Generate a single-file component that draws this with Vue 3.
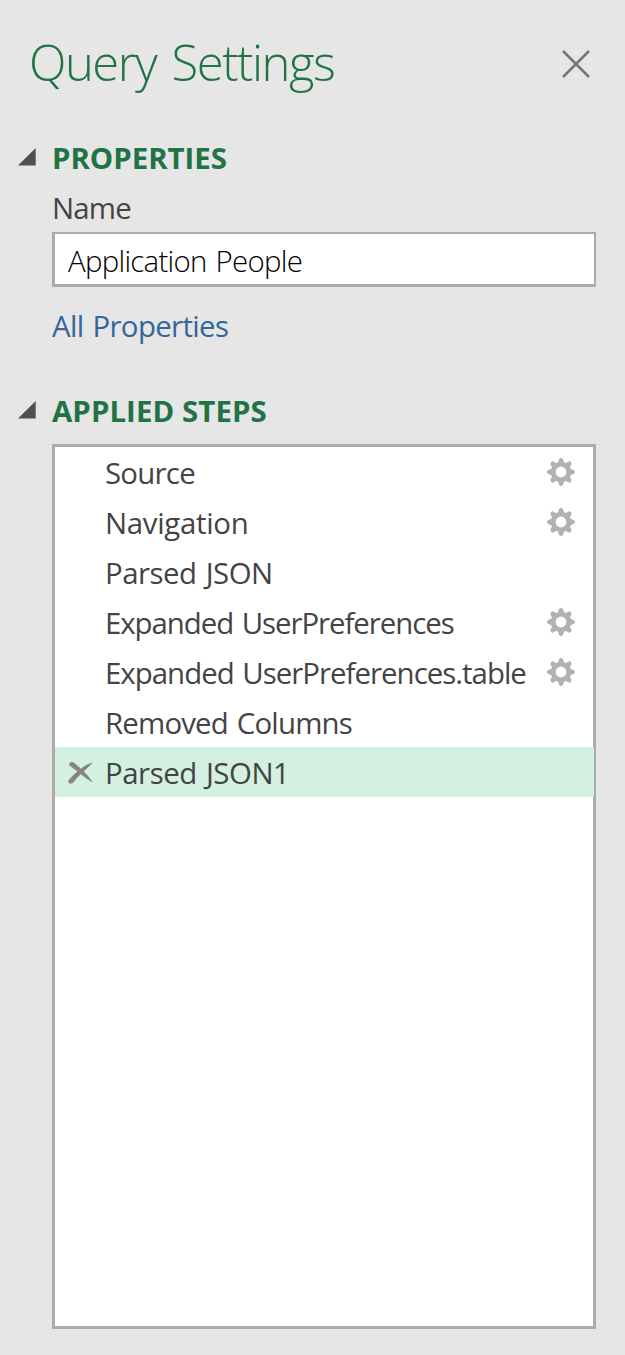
<script setup>
const steps = [
  { name: 'Source', gear: true, spacing: -0.75 },
  { name: 'Navigation', gear: true, spacing: -0.3 },
  { name: 'Parsed JSON', gear: false, spacing: -0.5 },
  { name: 'Expanded UserPreferences', gear: true, spacing: -1.05 },
  { name: 'Expanded UserPreferences.table', gear: true, spacing: -0.98 },
  { name: 'Removed Columns', gear: false, spacing: -0.82 },
  { name: 'Parsed JSON1', gear: false, selected: true, spacing: -0.46 },
]
const teeth = [0, 45, 90, 135, 180, 225, 270, 315]
</script>

<template>
  <aside class="pane">
    <header class="head">
      <h1 class="title">Query Settings</h1>
      <svg class="close" width="28" height="28" viewBox="0 0 28 28">
        <path d="M1 1 27 27M27 1 1 27" fill="none" stroke="#767676" stroke-width="2.5" />
      </svg>
    </header>

    <section class="properties">
      <h2 class="section-title">
        <svg class="arrow" width="18" height="18" viewBox="0 0 18 18"><path d="M17.7 0V17.5H0Z" fill="#505050" /></svg>
        <span class="props-label">PROPERTIES</span>
      </h2>
      <label class="name-label">Name</label>
      <div class="name-box"><span>Application People</span></div>
      <a class="link">All Properties</a>
    </section>

    <section class="applied">
      <h2 class="section-title">
        <svg class="arrow" width="18" height="18" viewBox="0 0 18 18"><path d="M17.7 0V17.5H0Z" fill="#505050" /></svg>
        <span class="steps-label">APPLIED STEPS</span>
      </h2>
      <ul class="steps">
        <li v-for="s in steps" :key="s.name" class="step" :class="{ selected: s.selected }">
          <span class="remove">
            <svg v-if="s.selected" width="26" height="24" viewBox="0 0 26 24">
              <path d="M1.2 4.2C.8 1.2 3.8.2 5.8 1.6L13 7.8C16.5 4.8 20.5 2.4 25 1.6C22 4.6 18.9 7.4 15.8 10.4C19.2 13.8 22.6 17.4 25 21.6C20.8 19.4 16.6 16.4 12.8 13.2C9.8 16 7.4 18.6 5.2 21.6C3.6 23.6-.8 22.4.6 19.2C3 15.8 6.2 13.2 9.4 10.4Z" fill="#858585" />
            </svg>
          </span>
          <span class="step-name" :style="{ letterSpacing: s.spacing + 'px' }">{{ s.name }}</span>
          <svg v-if="s.gear" class="gear" width="28" height="28" viewBox="-14 -14 28 28">
            <circle r="7.7" fill="none" stroke="#b2b2b2" stroke-width="4.6" />
            <path v-for="a in teeth" :key="a" :transform="`rotate(${a})`" d="M-4.2-8.6Q-2.6-9.8-2.3-12Q-2-14 0-14Q2-14 2.3-12Q2.6-9.8 4.2-8.6Z" fill="#b2b2b2" />
          </svg>
        </li>
      </ul>
    </section>
  </aside>
</template>

<style>
body {
  margin: 0;
  background: #e6e6e6;
}
</style>

<style scoped>
.pane {
  box-sizing: border-box;
  width: 625px;
  height: 1355px;
  padding: 34px 29px 26px 18px;
  background: #e6e6e6;
  color: #444;
  font-family: "Open Sans", "Noto Sans", sans-serif;
  font-size: 29.4px;
  white-space: nowrap;
}
.head {
  display: flex;
  justify-content: space-between;
  height: 104px;
  padding: 0 6px 0 11px;
}
.title {
  margin: 0;
  color: #217346;
  font-size: 49px;
  font-weight: 300;
  line-height: 57px;
  letter-spacing: -1.5px;
  word-spacing: 4px;
}
.close {
  margin-top: 16px;
}
.properties {
  height: 253px;
}
.section-title {
  display: flex;
  margin: 0;
  height: 40px;
  line-height: 40px;
  color: #217346;
  font-size: 29.4px;
  font-weight: 700;
}
.steps-label {
  letter-spacing: 0.08px;
}
.arrow {
  margin: 10px 16px 0 0;
}
.name-label {
  display: block;
  margin-left: 34px;
  height: 54px;
  line-height: 60px;
  letter-spacing: -0.8px;
}
.name-box {
  box-sizing: border-box;
  height: 55px;
  margin-left: 34px;
  padding-left: 13px;
  border: 3px solid #ababab;
  border-top-width: 2px;
  border-right-width: 2px;
  background: #fff;
  color: #000;
  font-weight: 300;
  line-height: 54px;
  letter-spacing: -0.72px;
  word-spacing: 2px;
}
.link {
  display: block;
  margin: 19px 0 0 34px;
  line-height: 40px;
  color: #336699;
  letter-spacing: -0.65px;
  word-spacing: 2px;
}
.steps {
  box-sizing: border-box;
  height: 885px;
  margin: 13px 0 0 34px;
  padding: 0;
  border: 3px solid #ababab;
  background: #fff;
  list-style: none;
}
.step {
  display: flex;
  align-items: flex-start;
  height: 50px;
  line-height: 52px;
}
.selected {
  margin-right: -1px;
  background: #d3f0e0;
}
.remove {
  display: flex;
  flex: none;
  box-sizing: border-box;
  width: 50px;
  padding: 14px 0 0 13px;
}
.step-name {
  flex: 1;
  min-width: 0;
  word-spacing: 2px;
}
.gear {
  flex: none;
  margin: 11px 18px 0 0;
}
</style>
